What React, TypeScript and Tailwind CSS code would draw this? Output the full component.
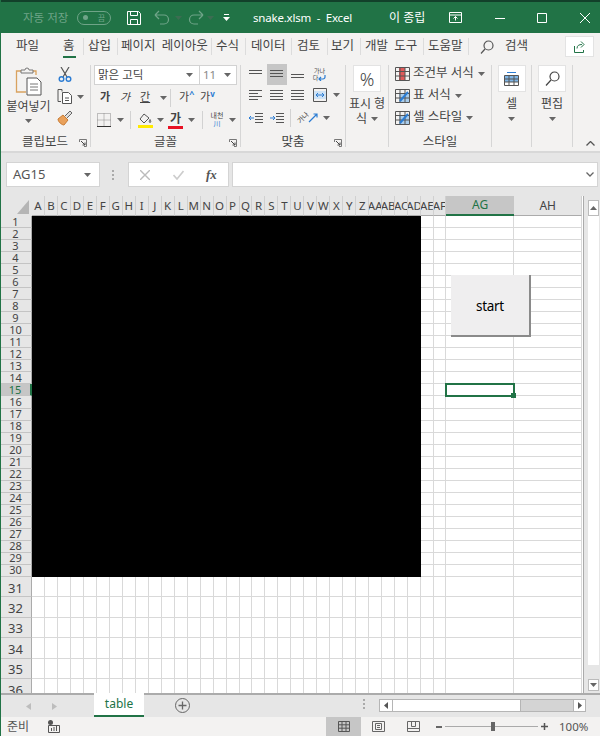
import React from 'react';

const FONT = "font-['Noto_Sans','Noto_Sans_CJK_KR',sans-serif]";

const rowCount = 36;
const letters = 'ABCDEFGHIJKLMNOPQRSTUVWXYZ'.split('');
const columns = [...letters, 'AA', 'AB', 'AC', 'AD', 'AE', 'AF', 'AG', 'AH'];

function Caret({ className = '' }: { className?: string }) {
  return (
    <svg width="7" height="4" viewBox="0 0 7 4" className={className}>
      <path d="M0 0h7L3.5 4z" fill="#666" />
    </svg>
  );
}

function Launcher() {
  return (
    <svg width="8" height="8" viewBox="0 0 8 8" fill="none" stroke="#777">
      <path d="M.5 3V.5H7.5V7.5H5" />
      <path d="M2 2l4 4M6 3.5V6H3.5" stroke="#444" />
    </svg>
  );
}

function Lines({ widths, x = 0 }: { widths: number[]; x?: number }) {
  return (
    <svg width="14" height="12" viewBox="0 0 14 12" stroke="#555" fill="none">
      {widths.map((w, i) => (
        <path key={i} d={`M${x} ${1.5 + i * 3}h${w}`} />
      ))}
    </svg>
  );
}

function Group({
  width,
  label,
  launcher,
  children,
}: {
  width: string;
  label: string;
  launcher?: boolean;
  children: React.ReactNode;
}) {
  return (
    <>
      <div className={`${width} relative flex h-[91px] shrink-0 flex-col`}>
        <div className="h-[73px] shrink-0">{children}</div>
        <div className="flex h-[18px] items-center justify-center text-[12.5px] text-[#444]">{label}</div>
        {launcher && (
          <div className="absolute right-[3px] bottom-[4px] flex">
            <Launcher />
          </div>
        )}
      </div>
      <span className="mt-[5px] h-[82px] w-px shrink-0 bg-[#d6d6d6]" />
    </>
  );
}

function TitleBar() {
  return (
    <div className="flex h-[33px] shrink-0 items-center border-t-2 border-[#12402a] bg-[#217346] text-white">
      <span className="ml-[23px] w-[54px] text-[11.5px] text-[#6fa488]">자동 저장</span>
      <div className="flex h-[14px] w-[34px] items-center justify-between rounded-full border border-[#6fa488] px-[5px]">
        <span className="h-[5px] w-[5px] rounded-full bg-[#6fa488]" />
        <span className="text-[8px] text-[#6fa488]">끔</span>
      </div>
      <svg width="16" height="16" viewBox="0 0 16 16" fill="none" stroke="white" className="ml-[15px]">
        <path d="M1.5 1.5h11l2 2v11h-13z" />
        <path d="M4.5 1.5v4h7v-4M4.5 14.5v-5h7v5" />
      </svg>
      <svg width="18" height="16" viewBox="0 0 18 16" fill="none" stroke="#6fa488" strokeWidth="1.2" className="ml-[12px]">
        <path d="M1 5h9a4.5 4.5 0 0 1 0 9H6M1 5l4-4M1 5l4 4" />
      </svg>
      <Caret className="ml-[3px] opacity-40" />
      <svg width="18" height="16" viewBox="0 0 18 16" fill="none" stroke="#6fa488" strokeWidth="1.2" className="ml-[4px]">
        <path d="M17 5H8a4.5 4.5 0 0 0 0 9h4M17 5l-4-4M17 5l-4 4" />
      </svg>
      <Caret className="ml-[3px] opacity-40" />
      <svg width="7" height="8" viewBox="0 0 7 8" className="ml-[9px]">
        <path d="M1 0h5v1H1zM0 3h7L3.5 7z" fill="white" />
      </svg>
      <span className="ml-[23px] w-[136px] text-[11.5px] tracking-[-0.2px] whitespace-pre">snake.xlsm  -  Excel</span>
      <span className="w-[60px] text-[12px]">이 종립</span>
      <svg width="13" height="11" viewBox="0 0 13 11" fill="none" stroke="white">
        <path d="M.5.5h12v10H.5zM.5 3h12M6.5 8.5V4.5M4.5 6.5l2-2 2 2" />
      </svg>
      <svg width="10" height="10" viewBox="0 0 10 10" stroke="white" className="ml-[33px]">
        <path d="M0 5.5h10" />
      </svg>
      <svg width="10" height="10" viewBox="0 0 10 10" stroke="white" fill="none" className="ml-[32px]">
        <path d="M.5.5h9v9h-9z" />
      </svg>
      <svg width="10" height="10" viewBox="0 0 10 10" stroke="white" className="ml-[33px]">
        <path d="M0 0l10 10M10 0L0 10" />
      </svg>
    </div>
  );
}

function TabRow() {
  // name, text slot, divider after it (null when the tab has none)
  const tabs: [string, string, string | null][] = [
    ['파일', 'ml-[16px] w-[23px]', null],
    ['홈', 'ml-[24px] w-[12px]', 'ml-[8px]'],
    ['삽입', 'ml-[4px] w-[23px]', 'ml-[6px]'],
    ['페이지 레이아웃', 'ml-[3px] w-[87px]', 'ml-[3px]'],
    ['수식', 'ml-[4px] w-[23px]', 'ml-[6px]'],
    ['데이터', 'ml-[5px] w-[35px]', 'ml-[5px]'],
    ['검토', 'ml-[5px] w-[23px]', 'ml-[7px]'],
    ['보기', 'ml-[3px] w-[23px]', 'ml-[6px]'],
    ['개발 도구', 'ml-[4px] w-[53px]', 'ml-[5px]'],
    ['도움말', 'ml-[4px] w-[35px]', 'ml-[5px]'],
  ];
  return (
    <div className="flex h-[27px] shrink-0 items-center text-[12.5px] text-[#444] [word-spacing:3px]">
      {tabs.map(([name, cls, divider]) => (
        <React.Fragment key={name}>
          <span className={`${cls} flex h-[20px] shrink-0 items-center overflow-hidden whitespace-nowrap`}>{name}</span>
          {divider && <span className={`${divider} h-[17px] w-px shrink-0 bg-[#dcdcdc]`} />}
        </React.Fragment>
      ))}
      <svg width="14" height="14" viewBox="0 0 14 14" fill="none" stroke="#555" strokeWidth="1.2" className="ml-[11px]">
        <circle cx="8.5" cy="5.5" r="4.5" />
        <path d="M5 9l-4 4.5" />
      </svg>
      <span className="ml-[11px] w-[23px] whitespace-nowrap">검색</span>
      <div className="ml-[37px] flex h-[21px] w-[29px] items-center justify-center border border-[#e3e3e3] bg-white">
        <svg width="12" height="12" viewBox="0 0 12 12" fill="none" stroke="#217346">
          <path d="M.5 5v6.5h9V9M3 7.5C3 4.5 5 3.5 8 3.5M7 .5l3 3-3 3" />
        </svg>
      </div>
    </div>
  );
}

function ClipboardGroup() {
  return (
    <div className="flex">
      <div className="flex w-[57px] flex-col items-center pt-[7px]">
        <svg width="28" height="29" viewBox="0 0 28 29" fill="none">
          <path d="M6 4H1.5v21H11" stroke="#d9a25f" strokeWidth="1.3" />
          <path d="M17 4h4v4" stroke="#d9a25f" strokeWidth="1.3" />
          <path d="M6 6V3h4a2 2 0 0 1 4 0h4v3z" stroke="#777" fill="#f3f2f1" />
          <path d="M12 11h10l4 4v13H12z" stroke="#555" fill="white" />
          <path d="M15 17h8M15 20h8M15 23h8" stroke="#777" />
        </svg>
        <span className="mt-[2px] text-[12px] leading-[18px] whitespace-nowrap text-[#444]">붙여넣기</span>
        <Caret className="mt-[3px]" />
      </div>
      <div className="flex flex-col pt-[7px]">
        <svg width="14" height="15" viewBox="0 0 14 15" fill="none" className="ml-[1px]">
          <path d="M3 0l6 10M11 0L5 10" stroke="#555" strokeWidth="1.2" />
          <circle cx="3.5" cy="12" r="2.3" stroke="#2b7cd3" strokeWidth="1.4" />
          <circle cx="10.5" cy="12" r="2.3" stroke="#2b7cd3" strokeWidth="1.4" />
        </svg>
        <div className="mt-[7px] flex items-center">
          <svg width="16" height="15" viewBox="0 0 16 15" fill="none" stroke="#555">
            <path d="M5 2.5V.5h-4v12h3" />
            <path d="M5.5 3.5h6l3 3v8h-9z" fill="white" />
            <path d="M8 9h4M8 11.5h4" />
          </svg>
          <Caret className="ml-[4px]" />
        </div>
        <svg width="16" height="16" viewBox="0 0 16 16" fill="none" className="mt-[6px]">
          <path d="M1 9l5-4 5 5-4 5C5 15 1 12 1 9z" fill="#e9a15b" stroke="#c97c34" />
          <path d="M8 6l5-5 2 2-5 5" fill="#ddd" stroke="#666" />
        </svg>
      </div>
    </div>
  );
}

function FontGroup() {
  return (
    <div className="flex flex-col pl-[3px] pt-[5px]">
      <div className="flex h-[20px] w-[143px] border border-[#d2d2d2] bg-white text-[11.5px] text-[#444]">
        <div className="flex w-[105px] items-center justify-between border-r border-[#d2d2d2] pl-[3px] pr-[6px]">
          <span>맑은 고딕</span>
          <Caret />
        </div>
        <div className="flex flex-1 items-center justify-between pl-[3px] pr-[5px] text-[#888]">
          <span>11</span>
          <Caret />
        </div>
      </div>
      <div className="mt-[3px] flex h-[19px] items-center text-[11px] text-[#444]">
        <span className="ml-[6px] w-[20px] font-bold">가</span>
        <span className="w-[20px] italic">가</span>
        <span className="w-[20px] underline">간</span>
        <Caret />
        <span className="ml-[3px] h-[18px] border-l border-[#d2d2d2]" />
        <span className="ml-[8px] w-[21px]">
          가<sup className="text-[9px] font-bold text-[#2b7cd3]">^</sup>
        </span>
        <span>
          가<sup className="text-[8px] font-bold text-[#2b7cd3]">v</sup>
        </span>
      </div>
      <div className="mt-[3px] flex h-[20px] items-center text-[#444]">
        <svg width="14" height="14" viewBox="0 0 14 14" fill="none" stroke="#888" strokeDasharray="1 1" className="ml-[3px]">
          <path d="M.5.5h13v13H.5zM7 .5v13M.5 7h13" />
          <path d="M0 13.5h14" stroke="#333" strokeDasharray="none" />
        </svg>
        <Caret className="ml-[6px]" />
        <span className="ml-[6px] h-[18px] border-l border-[#d2d2d2]" />
        <div className="ml-[7px] flex w-[14px] flex-col items-center">
          <svg width="13" height="11" viewBox="0 0 13 11" fill="none" stroke="#555">
            <path d="M5 1L1 6l4 4 5-5zM11 6.5c1 1.5 1 3 0 3s-1-1.500 0-3z" />
          </svg>
          <span className="mt-[1px] h-[3px] w-[15px] bg-[#ffea00]" />
        </div>
        <Caret className="ml-[5px]" />
        <div className="ml-[4px] flex w-[15px] flex-col items-center">
          <span className="h-[13px] text-[12px] leading-[13px] font-bold">가</span>
          <span className="mt-[1px] h-[3px] w-[15px] bg-[#e81123]" />
        </div>
        <Caret className="ml-[5px]" />
        <span className="ml-[7px] h-[18px] border-l border-[#d2d2d2]" />
        <div className="ml-[6px] flex w-[16px] flex-col items-center text-[7px] leading-[8px]">
          <span className="whitespace-nowrap">내천</span>
          <span className="text-[#2b7cd3]">川</span>
        </div>
        <Caret className="ml-[4px]" />
      </div>
    </div>
  );
}

function AlignmentGroup() {
  return (
    <div className="grid grid-cols-[21px_21px_21px_23px_10px] grid-rows-[21px_20px_25px] items-center justify-items-center pl-[4px] pt-[4px]">
      <Lines widths={[13, 13]} />
      <div className="flex h-[21px] w-[20px] items-center justify-center bg-[#c6c6c6]">
        <Lines widths={[13, 13, 13]} />
      </div>
      <div className="mt-[8px]">
        <Lines widths={[13, 13]} />
      </div>
      <div className="flex flex-col items-center text-[6px] leading-[7px] text-[#444]">
        <span>가나</span>
        <div className="flex items-center">
          <span>다</span>
          <svg width="8" height="6" viewBox="0 0 8 6" fill="none" stroke="#2b7cd3" strokeWidth="1.2">
            <path d="M7 0v2a2 2 0 0 1-2 2H1M3 2L1 4l2 2" />
          </svg>
        </div>
      </div>
      <span />
      <Lines widths={[13, 9, 13, 9]} />
      <Lines widths={[13, 13, 13, 13]} />
      <Lines widths={[13, 13, 13, 13]} />
      <svg width="14" height="14" viewBox="0 0 14 14" fill="none">
        <path d="M.5.5h13v13H.5z" stroke="#555" />
        <path d="M1 3h12v8H1z" fill="#cfe3f5" />
        <path d="M3 7h8M5 5L3 7l2 2M9 5l2 2-2 2" stroke="#2b7cd3" />
      </svg>
      <Caret />
      <svg width="14" height="12" viewBox="0 0 14 12" fill="none">
        <path d="M6 1.500h8M6 4.500h8M6 7.500h8M6 10.500h8" stroke="#555" />
        <path d="M5 6H0M2 4L0 6l2 2" stroke="#2b7cd3" />
      </svg>
      <svg width="14" height="12" viewBox="0 0 14 12" fill="none">
        <path d="M6 1.500h8M6 4.500h8M6 7.500h8M6 10.500h8" stroke="#555" />
        <path d="M0 6h5M3 4l2 2-2 2" stroke="#2b7cd3" />
      </svg>
      <div className="col-span-3 flex items-center justify-self-start">
        <span className="ml-[3px] h-[18px] w-px bg-[#d2d2d2]" />
        <span className="ml-[6px] -rotate-45 text-[7px] leading-[8px] text-[#444]">가나</span>
        <svg width="11" height="11" viewBox="0 0 11 11" fill="none" stroke="#2b7cd3" strokeWidth="1.2" className="ml-[-2px]">
          <path d="M1 10l8-8M5.500 2H9v3.500" />
        </svg>
        <Caret className="ml-[4px]" />
      </div>
    </div>
  );
}

function NumberGroup() {
  return (
    <div className="flex flex-col items-center pt-[5px]">
      <div className="flex h-[27px] w-[28px] items-center justify-center border border-[#e3e3e3] bg-white text-[18px] leading-none font-light text-[#444]">
        %
      </div>
      <span className="mt-[4px] text-[12px] leading-[16px] whitespace-nowrap text-[#444]">표시 형</span>
      <div className="flex items-center text-[12px] leading-[14px] text-[#444]">
        <span>식</span>
        <Caret className="ml-[4px]" />
      </div>
    </div>
  );
}

function StyleIcon({ kind }: { kind: 'cond' | 'table' | 'cell' }) {
  return (
    <svg width="15" height="14" viewBox="0 0 15 14" fill="none">
      {kind === 'cond' && <path d="M4 1h6v12H4z" fill="#e05a5a" />}
      {kind !== 'cond' && <path d="M4 4h10v9H4z" fill="#a9cdec" />}
      <path d="M.5.500h14v13H.5zM.5 4.500h14M.5 9h14M5 .5v13M10 .5v13" stroke="#555" />
      {kind !== 'cond' && <path d="M5 12L13 3" stroke="#2b7cd3" strokeWidth="2" />}
    </svg>
  );
}

function StylesGroup() {
  const items: ['cond' | 'table' | 'cell', string][] = [
    ['cond', '조건부 서식'],
    ['table', '표 서식'],
    ['cell', '셀 스타일'],
  ];
  return (
    <div className="flex flex-col gap-[7px] pl-[6px] pt-[6px]">
      {items.map(([kind, name]) => (
        <div key={kind} className="flex h-[15px] items-center text-[12.5px] whitespace-nowrap text-[#444]">
          <StyleIcon kind={kind} />
          <span className="ml-[3px]">{name}</span>
          <Caret className="ml-[4px]" />
        </div>
      ))}
    </div>
  );
}

function BigButton({ label, children }: { label: string; children: React.ReactNode }) {
  return (
    <div className="flex flex-col items-center pt-[5px]">
      <div className="flex h-[27px] w-[28px] items-center justify-center border border-[#e3e3e3] bg-white">{children}</div>
      <span className="mt-[4px] text-[12px] leading-[16px] text-[#444]">{label}</span>
      <Caret className="mt-[5px]" />
    </div>
  );
}

function Ribbon() {
  return (
    <div className="flex h-[91px] shrink-0">
      <Group width="w-[90px]" label="클립보드" launcher>
        <ClipboardGroup />
      </Group>
      <Group width="w-[149px]" label="글꼴" launcher>
        <FontGroup />
      </Group>
      <Group width="w-[104px]" label="맞춤" launcher>
        <AlignmentGroup />
      </Group>
      <Group width="w-[42px]" label="">
        <NumberGroup />
      </Group>
      <Group width="w-[102px]" label="스타일">
        <StylesGroup />
      </Group>
      <Group width="w-[39px]" label="">
        <BigButton label="셀">
          <svg width="15" height="15" viewBox="0 0 15 15" fill="none">
            <path d="M1 4h13v7H1z" fill="#7fb5e6" />
            <path d="M.5 4.500h14v10H.5zM.5 8h14M.5 11h14M5 4.500v10M10 4.500v10" stroke="#555" />
            <path d="M3 1.500h9" stroke="#2b7cd3" />
          </svg>
        </BigButton>
      </Group>
      <Group width="w-[40px]" label="">
        <BigButton label="편집">
          <svg width="15" height="15" viewBox="0 0 15 15" fill="none" stroke="#444" strokeWidth="1.2">
            <circle cx="9.500" cy="5.500" r="4.500" />
            <path d="M6 9l-5 5.500" />
          </svg>
        </BigButton>
      </Group>
      <svg width="9" height="5" viewBox="0 0 9 5" fill="none" stroke="#555" strokeWidth="1.3" className="mt-[81px] ml-[13px]">
        <path d="M.5 4.500l4-4 4 4" />
      </svg>
    </div>
  );
}

function FormulaBar() {
  return (
    <div className="flex h-[45px] shrink-0 items-start border-t-2 border-[#d8d8d8] bg-[#e6e6e6] pl-[6px] pt-[9px]">
      <div className="flex h-[25px] w-[94px] items-center justify-between border border-[#d4d4d4] bg-white pl-[6px] pr-[8px] text-[13px] text-[#555]">
        <span>AG15</span>
        <Caret />
      </div>
      <div className="ml-[10px] flex h-[25px] w-[6px] flex-col items-center justify-center gap-[2px]">
        <span className="h-[2px] w-[2px] bg-[#aaa]" />
        <span className="h-[2px] w-[2px] bg-[#aaa]" />
        <span className="h-[2px] w-[2px] bg-[#aaa]" />
      </div>
      <div className="ml-[12px] flex h-[25px] w-[101px] items-center border border-[#d4d4d4] bg-white">
        <svg width="10" height="10" viewBox="0 0 10 10" stroke="#bbb" strokeWidth="1.4" className="ml-[11px]">
          <path d="M0 0l10 10M10 0L0 10" />
        </svg>
        <svg width="11" height="10" viewBox="0 0 11 10" fill="none" stroke="#ccc" strokeWidth="1.6" className="ml-[23px]">
          <path d="M.5 5l3.500 4L10.500 1" />
        </svg>
        <span className="ml-[22px] font-['Liberation_Serif',serif] text-[13px] font-bold italic text-[#555]">fx</span>
      </div>
      <div className="ml-[3px] flex h-[25px] w-[366px] items-center justify-end border border-[#d4d4d4] bg-white pr-[3px]">
        <svg width="8" height="5" viewBox="0 0 8 5" fill="none" stroke="#666" strokeWidth="1.3">
          <path d="M.5.5l3.500 3.500L7.500.5" />
        </svg>
      </div>
    </div>
  );
}

function SheetGrid() {
  return (
    <div className="relative h-[497px] w-[584px] shrink-0 overflow-hidden border-r border-[#ababab]">
      <div className="grid grid-cols-[32px_repeat(30,12.97px)_12.55px_12.55px_68px_68px] grid-rows-[20px_repeat(30,12.04px)_repeat(6,20.4px)] bg-white text-[#444]">
        {/* corner */}
        <div className="flex items-end justify-end bg-[#e6e6e6] pb-[2px] pr-[3px]">
          <svg width="12" height="14" viewBox="0 0 12 14">
            <path d="M12 0v14H0z" fill="#b5b5b5" />
          </svg>
        </div>
        {columns.map((c, i) => {
          const active = c === 'AG';
          const wide = i >= 32;
          return (
            <div
              key={c}
              className={`flex items-center justify-center overflow-hidden border-b whitespace-nowrap ${
                wide ? 'text-[12px]' : 'text-[11.5px]'
              } ${
                active
                  ? 'border-b-2 border-[#217346] bg-[#c6c6c6] text-[#217346]'
                  : 'border-r border-b-[#ababab] border-r-[#d0d0d0] bg-[#e6e6e6]'
              }`}
            >
              {c}
            </div>
          );
        })}
        {Array.from({ length: rowCount }).map((_, r) => (
          <React.Fragment key={r}>
            <div
              className={`flex items-center justify-center overflow-hidden border-b border-[#c4c4c4] ${
                r >= 30 ? 'pt-[2px] text-[13px] leading-[16px]' : 'text-[11px] leading-[12px]'
              } ${r === 14 ? 'border-r-2 border-r-[#217346] bg-[#c6c6c6] text-[#217346]' : 'border-r border-r-[#ababab] bg-[#e6e6e6]'}`}
            >
              {r + 1}
            </div>
            {columns.map((c, i) => {
              if (r < 30 && i < 30) return <div key={c} className="bg-black" />;
              const selected = r === 14 && c === 'AG';
              return (
                <div
                  key={c}
                  className={`relative border-r border-b border-[#d9d9d9] ${
                    selected ? 'z-10 outline-2 outline-offset-[-1px] outline-[#217346]' : ''
                  }`}
                >
                  {selected && <span className="absolute right-[-3px] bottom-[-3px] h-[5px] w-[5px] bg-[#217346]" />}
                </div>
              );
            })}
          </React.Fragment>
        ))}
      </div>
      <button className="absolute top-[79px] left-[451px] z-20 flex h-[62px] w-[80px] items-center justify-center border-r-2 border-b-2 border-[#8a8a8a] bg-[#efeeef] pt-[2px] text-[13.5px] tracking-[-0.3px] text-black">
        start
      </button>
    </div>
  );
}

function VerticalScroll() {
  return (
    <div className="flex h-[497px] w-[16px] flex-col items-center bg-[#e6e6e6] pt-[4px] pb-[1px] pl-[3px]">
      <div className="flex h-[16px] w-[11px] shrink-0 items-center justify-center border border-[#bbb] bg-white">
        <Caret className="rotate-180" />
      </div>
      <div className="h-[449px] w-[11px] shrink-0 bg-white" />
      <div className="mt-[14px] flex h-[12px] w-[11px] shrink-0 items-center justify-center border border-[#bbb] bg-white">
        <Caret />
      </div>
    </div>
  );
}

function SheetTabs() {
  return (
    <div className="flex h-[24px] shrink-0 border-t-2 border-[#ababab] bg-[#e6e6e6]">
      <svg width="5" height="7" viewBox="0 0 5 7" className="mt-[8px] ml-[26px]">
        <path d="M5 0v7L0 3.500z" fill="#bdbdbd" />
      </svg>
      <svg width="5" height="7" viewBox="0 0 5 7" className="mt-[8px] ml-[21px]">
        <path d="M0 0v7l5-3.500z" fill="#bdbdbd" />
      </svg>
      <div className="mt-[-2px] ml-[37px] flex h-[24px] w-[50px] items-center justify-center border-b-2 border-[#217346] bg-white text-[12px] text-[#217346]">
        table
      </div>
      <svg width="15" height="15" viewBox="0 0 15 15" fill="none" stroke="#666" className="mt-[3px] ml-[31px]">
        <circle cx="7.500" cy="7.500" r="7" />
        <path d="M3.500 7.500h8M7.500 3.500v8" strokeWidth="1.300" />
      </svg>
      <div className="mt-[4px] ml-[173px] flex w-[2px] flex-col gap-[2px]">
        <span className="h-[2px] bg-[#aaa]" />
        <span className="h-[2px] bg-[#aaa]" />
        <span className="h-[2px] bg-[#aaa]" />
      </div>
      <div className="mt-[4px] ml-[14px] flex h-[13px] w-[207px] border-y border-[#b5b5b5] bg-[#d4d4d4]">
        <div className="flex w-[14px] items-center justify-center border-x border-[#b5b5b5] bg-white">
          <svg width="4" height="7" viewBox="0 0 4 7">
            <path d="M4 0v7L0 3.500z" fill="#555" />
          </svg>
        </div>
        <div className="w-[128px] border-r border-[#b5b5b5] bg-white" />
        <div className="flex-1" />
        <div className="flex w-[13px] items-center justify-center border-x border-[#b5b5b5] bg-white">
          <svg width="4" height="7" viewBox="0 0 4 7">
            <path d="M0 0v7l4-3.500z" fill="#555" />
          </svg>
        </div>
      </div>
    </div>
  );
}

function StatusBar() {
  return (
    <div className="flex h-[19px] shrink-0 items-center bg-[#f3f2f1] text-[12px] text-[#555]">
      <span className="ml-[7px] w-[23px]">준비</span>
      <svg width="12" height="13" viewBox="0 0 12 13" fill="none" className="ml-[18px]">
        <circle cx="2.500" cy="2.500" r="2.500" fill="#555" />
        <path d="M.5 5.500h11v7H.5z" stroke="#555" />
        <path d="M3.500 11V8M6 11V7M8.500 11V6" stroke="#555" />
      </svg>
      <div className="ml-[266px] flex h-[19px] w-[35px] items-center justify-center bg-[#c6c6c6]">
        <svg width="12" height="11" viewBox="0 0 12 11" fill="none" stroke="#555">
          <path d="M.5.5h11v10H.5zM.5 3.800h11M.5 7.200h11M4 .5v10M8 .5v10" />
        </svg>
      </div>
      <svg width="13" height="11" viewBox="0 0 13 11" fill="none" stroke="#666" className="ml-[11px]">
        <path d="M.5.5h12v10H.5zM3.500 2.500h6v6h-6zM5 4.500h3M5 6.500h3" />
      </svg>
      <svg width="13" height="11" viewBox="0 0 13 11" fill="none" stroke="#666" className="ml-[22px]">
        <path d="M.5.5h12v10H.5zM4.500.5v5h4v-5M.5 7.500h12" />
      </svg>
      <span className="ml-[16px] h-[2px] w-[6px] bg-[#666]" />
      <div className="ml-[3px] flex h-[9px] w-[93px] items-center justify-start">
        <span className="h-[1px] w-[46px] bg-[#aaa]" />
        <span className="h-[9px] w-[4px] bg-[#666]" />
        <span className="h-[1px] w-[43px] bg-[#aaa]" />
      </div>
      <svg width="7" height="7" viewBox="0 0 7 7" stroke="#555" strokeWidth="1.500" className="ml-[3px]">
        <path d="M0 3.500h7M3.500 0v7" />
      </svg>
      <span className="ml-[11px] text-[11.5px]">100%</span>
    </div>
  );
}

export default function App() {
  return (
    <div className={`${FONT} relative flex h-[736px] w-[600px] flex-col overflow-hidden bg-[#f3f2f1]`}>
      <TitleBar />
      <div className="relative shrink-0">
        <TabRow />
        {/* active tab underline */}
        <span className="absolute top-[23px] left-[63px] h-[2px] w-[13px] bg-[#217346]" />
      </div>
      <Ribbon />
      <FormulaBar />
      <div className="flex shrink-0">
        <SheetGrid />
        <VerticalScroll />
      </div>
      <SheetTabs />
      <StatusBar />
      {/* window edge */}
      <span className="absolute top-0 bottom-0 left-0 z-30 w-px bg-[#217346]" />
    </div>
  );
}
